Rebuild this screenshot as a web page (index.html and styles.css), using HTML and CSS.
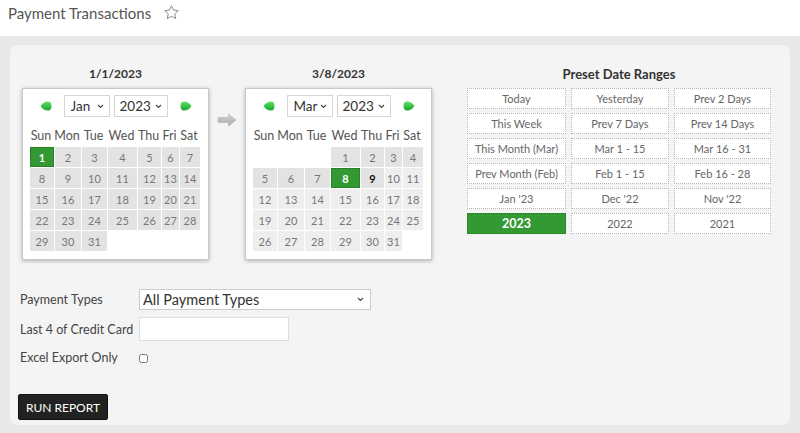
FILE: index.html
```html
<!DOCTYPE html>
<html>
<head>
<meta charset="utf-8">
<link rel="stylesheet" href="styles.css">
</head>
<body>
<div class="title-bar">
  <h1 class="title">Payment Transactions</h1>
  <svg class="star" width="17" height="17" viewBox="0 0 24 24"><path d="M12 2.5l2.9 6.1 6.6.8-4.9 4.6 1.3 6.6L12 17.3l-5.9 3.3 1.3-6.6-4.9-4.6 6.6-.8z" fill="none" stroke="#8a8a8a" stroke-width="1.4" stroke-linejoin="round"/></svg>
</div>
<div class="band">
  <div class="panel">
    <div class="top-row">
      <div class="cal-wrap">
        <div class="cal-label">1/1/2023</div>
        <div class="cal">
          <div class="cal-nav">
            <svg class="nav-arrow" width="12" height="10" viewBox="0 0 12 10"><defs><linearGradient id="g1" x1="0" y1="0" x2="0" y2="1"><stop offset="0" stop-color="#5fe06a"/><stop offset="1" stop-color="#16a82a"/></linearGradient></defs><path d="M0.5 5 C2.5 2 5 0.5 8 0.5 C10.5 0.5 11.5 2.5 11.5 5 C11.5 7.5 10.5 9.5 8 9.5 C5 9.5 2.5 8 0.5 5 Z" fill="url(#g1)"/></svg>
            <span class="selbox sb-month"><select><option>Jan</option></select><svg class="chev" width="7" height="5" viewBox="0 0 7 5"><path d="M1 1 L3.5 3.5 L6 1" fill="none" stroke="#444" stroke-width="1.1"/></svg></span>
            <span class="selbox sb-year"><select><option>2023</option></select><svg class="chev" width="7" height="5" viewBox="0 0 7 5"><path d="M1 1 L3.5 3.5 L6 1" fill="none" stroke="#444" stroke-width="1.1"/></svg></span>
            <svg class="nav-arrow" width="12" height="10" viewBox="0 0 12 10"><defs><linearGradient id="g2" x1="0" y1="0" x2="0" y2="1"><stop offset="0" stop-color="#5fe06a"/><stop offset="1" stop-color="#16a82a"/></linearGradient></defs><path d="M11.5 5 C9.5 2 7 0.5 4 0.5 C1.5 0.5 0.5 2.5 0.5 5 C0.5 7.5 1.5 9.5 4 9.5 C7 9.5 9.5 8 11.5 5 Z" fill="url(#g2)"/></svg>
          </div>
          <div class="grid head">
            <span>Sun</span><span>Mon</span><span>Tue</span><span>Wed</span><span>Thu</span><span>Fri</span><span>Sat</span>
          </div>
          <div class="grid days">
            <span class="d sel">1</span><span class="d">2</span><span class="d">3</span><span class="d">4</span><span class="d">5</span><span class="d">6</span><span class="d">7</span>
            <span class="d">8</span><span class="d">9</span><span class="d">10</span><span class="d">11</span><span class="d">12</span><span class="d">13</span><span class="d">14</span>
            <span class="d">15</span><span class="d">16</span><span class="d">17</span><span class="d">18</span><span class="d">19</span><span class="d">20</span><span class="d">21</span>
            <span class="d">22</span><span class="d">23</span><span class="d">24</span><span class="d">25</span><span class="d">26</span><span class="d">27</span><span class="d">28</span>
            <span class="d">29</span><span class="d">30</span><span class="d">31</span><span></span><span></span><span></span><span></span>
          </div>
        </div>
      </div>
      <div class="between">
        <svg width="20" height="14" viewBox="0 0 20 14"><defs><linearGradient id="ga" x1="0" y1="0" x2="0" y2="1"><stop offset="0" stop-color="#d4d4d4"/><stop offset="1" stop-color="#a9a9a9"/></linearGradient></defs><path d="M1 4.5 H11.5 V1 L19 7 L11.5 13 V9.5 H1 Z" fill="url(#ga)" stroke="#b0b0b0" stroke-width="0.6" stroke-linejoin="round"/></svg>
      </div>
      <div class="cal-wrap">
        <div class="cal-label">3/8/2023</div>
        <div class="cal">
          <div class="cal-nav">
            <svg class="nav-arrow" width="12" height="10" viewBox="0 0 12 10"><defs><linearGradient id="g3" x1="0" y1="0" x2="0" y2="1"><stop offset="0" stop-color="#5fe06a"/><stop offset="1" stop-color="#16a82a"/></linearGradient></defs><path d="M0.5 5 C2.5 2 5 0.5 8 0.5 C10.5 0.5 11.5 2.5 11.5 5 C11.5 7.5 10.5 9.5 8 9.5 C5 9.5 2.5 8 0.5 5 Z" fill="url(#g3)"/></svg>
            <span class="selbox sb-month"><select><option>Mar</option></select><svg class="chev" width="7" height="5" viewBox="0 0 7 5"><path d="M1 1 L3.5 3.5 L6 1" fill="none" stroke="#444" stroke-width="1.1"/></svg></span>
            <span class="selbox sb-year"><select><option>2023</option></select><svg class="chev" width="7" height="5" viewBox="0 0 7 5"><path d="M1 1 L3.5 3.5 L6 1" fill="none" stroke="#444" stroke-width="1.1"/></svg></span>
            <svg class="nav-arrow" width="12" height="10" viewBox="0 0 12 10"><defs><linearGradient id="g4" x1="0" y1="0" x2="0" y2="1"><stop offset="0" stop-color="#5fe06a"/><stop offset="1" stop-color="#16a82a"/></linearGradient></defs><path d="M11.5 5 C9.5 2 7 0.5 4 0.5 C1.5 0.5 0.5 2.5 0.5 5 C0.5 7.5 1.5 9.5 4 9.5 C7 9.5 9.5 8 11.5 5 Z" fill="url(#g4)"/></svg>
          </div>
          <div class="grid head">
            <span>Sun</span><span>Mon</span><span>Tue</span><span>Wed</span><span>Thu</span><span>Fri</span><span>Sat</span>
          </div>
          <div class="grid days">
            <span></span><span></span><span></span><span class="d">1</span><span class="d">2</span><span class="d">3</span><span class="d">4</span>
            <span class="d">5</span><span class="d">6</span><span class="d">7</span><span class="d sel">8</span><span class="d today">9</span><span class="d fut">10</span><span class="d fut">11</span>
            <span class="d fut">12</span><span class="d fut">13</span><span class="d fut">14</span><span class="d fut">15</span><span class="d fut">16</span><span class="d fut">17</span><span class="d fut">18</span>
            <span class="d fut">19</span><span class="d fut">20</span><span class="d fut">21</span><span class="d fut">22</span><span class="d fut">23</span><span class="d fut">24</span><span class="d fut">25</span>
            <span class="d fut">26</span><span class="d fut">27</span><span class="d fut">28</span><span class="d fut">29</span><span class="d fut">30</span><span class="d fut">31</span><span></span>
          </div>
        </div>
      </div>
      <div class="presets">
        <div class="presets-title">Preset Date Ranges</div>
        <div class="preset-grid">
          <span class="pb">Today</span><span class="pb">Yesterday</span><span class="pb">Prev 2 Days</span>
          <span class="pb">This Week</span><span class="pb">Prev 7 Days</span><span class="pb">Prev 14 Days</span>
          <span class="pb">This Month (Mar)</span><span class="pb">Mar 1 - 15</span><span class="pb">Mar 16 - 31</span>
          <span class="pb">Prev Month (Feb)</span><span class="pb">Feb 1 - 15</span><span class="pb">Feb 16 - 28</span>
          <span class="pb">Jan '23</span><span class="pb">Dec '22</span><span class="pb">Nov '22</span>
          <span class="pb active">2023</span><span class="pb">2022</span><span class="pb">2021</span>
        </div>
      </div>
    </div>
    <div class="form">
      <div class="frow r1">
        <label class="flabel">Payment Types</label>
        <span class="selbox sb-ptype"><select><option>All Payment Types</option></select><svg class="chev" width="7" height="5" viewBox="0 0 7 5"><path d="M1 1 L3.5 3.5 L6 1" fill="none" stroke="#444" stroke-width="1.1"/></svg></span>
      </div>
      <div class="frow r2">
        <label class="flabel">Last 4 of Credit Card</label>
        <input class="cc" type="text">
      </div>
      <div class="frow r3">
        <label class="flabel">Excel Export Only</label>
        <input class="chk" type="checkbox">
      </div>
      <button class="run">RUN REPORT</button>
    </div>
  </div>
</div>
</body>
</html>
```
FILE: styles.css
```css
* { box-sizing: border-box; }
html, body { margin: 0; padding: 0; }
body {
  width: 800px;
  height: 433px;
  overflow: hidden;
  background: #ffffff;
  font-family: "Lato", "Liberation Sans", sans-serif;
  color: #444;
}
.title-bar {
  height: 36px;
  display: flex;
  align-items: flex-start;
  padding: 3px 0 0 8px;
}
.title {
  margin: 0;
  font-size: 15px;
  font-weight: 400;
  color: #555;
  line-height: 20px;
}
.star { margin-left: 12px; margin-top: 1px; }
.band {
  background: #e8e8e8;
  padding: 9px 10px 8px 10px;
  height: 397px;
}
.panel {
  background: #f4f4f4;
  border-radius: 7px;
  height: 380px;
  padding: 21px 0 0 8px;
}
.top-row {
  display: flex;
  align-items: flex-start;
}
.cal-wrap { display: flex; flex-direction: column; align-items: center; }
.cal-wrap:first-child { margin-left: 4px; }
.cal-label {
  font-size: 12px;
  font-weight: 700;
  color: #333;
  line-height: 16px;
  margin-bottom: 6px;
}
.cal {
  width: 187px;
  background: #fff;
  border: 1px solid #c8c8c8;
  box-shadow: 0 1px 4px rgba(0,0,0,0.28);
  padding: 6px 0 8px 7px;
}
.cal-nav {
  display: flex;
  align-items: center;
  justify-content: center;
  padding-right: 7px;
  height: 22px;
}
.nav-arrow { flex: none; }
.nav-arrow:first-child { margin-right: 12px; }
.nav-arrow:last-child { margin-left: 12px; }
.selbox {
  display: inline-flex;
  align-items: center;
  background: #fff;
  border: 1px solid #d6d6d6;
  padding-right: 5px;
  flex: none;
}
.selbox select {
  appearance: none;
  -webkit-appearance: none;
  border: none;
  background: transparent;
  outline: none;
  font-family: "Lato", "Liberation Sans", sans-serif;
  color: #333;
  padding: 0 0 0 5px;
  margin: 0;
  flex: 1;
  min-width: 0;
  height: 100%;
}
.chev { flex: none; }
.sb-month, .sb-year { height: 22px; }
.sb-month select, .sb-year select { font-size: 13.5px; }
.sb-month { width: 46px; margin-right: 4px; }
.sb-month select { padding-left: 6px; }
.sb-year { width: 54px; }
.grid {
  display: grid;
  grid-template-columns: 24px 26px 25px 29px 23px 17px 20px;
  column-gap: 1px;
}
.head {
  margin-top: 7px;
  height: 22px;
  align-items: center;
  font-size: 12.5px;
  color: #555;
  margin-left: -1px;
}
.head span { text-align: center; }
.days {
  margin-top: 1px;
  grid-auto-rows: 20px;
  row-gap: 1px;
}
.days span {
  display: flex;
  align-items: center;
  justify-content: center;
  font-size: 11px;
  color: #777;
}
.d { background: #e3e3e3; }
.d.fut { background: #eeeeee; }
.d.today { color: #111; font-weight: 700; }
.d.sel {
  background: #339933;
  color: #fff;
  font-weight: 700;
  box-shadow: inset 0 0 0 1px #2a7f2a;
}
.between {
  width: 36px;
  display: flex;
  justify-content: center;
  padding-top: 47px;
}
.presets { margin-left: 35px; width: 304px; }
.presets-title {
  text-align: center;
  font-size: 13px;
  font-weight: 700;
  color: #333;
  line-height: 16px;
  margin-bottom: 6px;
}
.preset-grid {
  display: grid;
  grid-template-columns: 99px 98px 97px;
  column-gap: 5px;
  row-gap: 4px;
}
.pb {
  height: 21px;
  border: 1px dotted #b5b5b5;
  background: #fff;
  display: flex;
  align-items: center;
  justify-content: center;
  font-size: 11px;
  color: #666;
}
.pb.active {
  background: #339933;
  border: 1px solid #2b8a2b;
  color: #fff;
  font-weight: 700;
  font-size: 12.5px;
}
.form { margin-top: 29px; }
.frow { display: flex; align-items: center; }
.flabel {
  width: 121px;
  padding-left: 2px;
  font-size: 12.5px;
  color: #444;
  flex: none;
}
.r1 { height: 21px; }
.sb-ptype { width: 232px; height: 21px; border-color: #ccc; padding-right: 6px; }
.sb-ptype select { font-size: 14.5px; padding-left: 3px; }
.r2 { height: 24px; margin-top: 7px; }
.cc {
  width: 150px;
  height: 24px;
  border: 1px solid #ddd;
  background: #fff;
  border-radius: 0;
}
.r3 { height: 20px; margin-top: 6px; }
.chk {
  margin: 2px 0 0 0;
  width: 9px;
  height: 9px;
}
.run {
  margin-top: 27px;
  width: 90px;
  height: 26px;
  background: #222;
  color: #fff;
  border: 1px solid #111;
  border-radius: 2px;
  font-family: "Lato", "Liberation Sans", sans-serif;
  font-size: 12px;
  padding: 0;
}
```
